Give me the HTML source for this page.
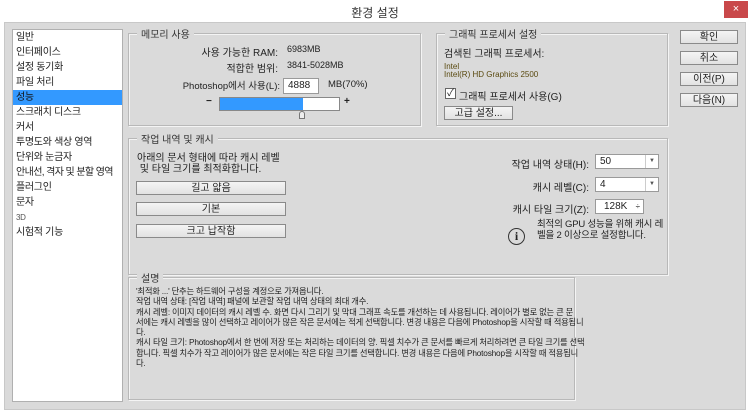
<!DOCTYPE html>
<html><head><meta charset="utf-8"><style>
*{margin:0;padding:0;box-sizing:border-box}
body{width:750px;height:415px;background:#fff;font-family:"Liberation Sans","Noto Sans CJK KR",sans-serif;font-size:10px;color:#222;position:relative;overflow:hidden}
.a{position:absolute;white-space:nowrap}
.r{position:absolute;white-space:nowrap;text-align:right}
.win{position:absolute;left:4px;top:22px;width:742px;height:388px;background:#dadada;border:1px solid #c8c8c8}
.grp{position:absolute;border:1px solid #b8b8b8;box-shadow:1px 1px 0 #f4f4f4 inset,1px 1px 0 #f4f4f4}
.lg{position:absolute;background:#dadada;padding:0 4px;top:-8px;left:8px;color:#333;font-size:10px}
.btn{position:absolute;background:linear-gradient(#f4f4f4,#e2e2e2);border:1px solid #8a8a8a;text-align:center;font-size:10px;line-height:13px}
.inp{position:absolute;background:#fff;border:1px solid #9a9a9a;padding-left:4px;line-height:13px;font-size:10px}
.list div{height:15px;line-height:15px;padding-left:3px;font-size:10px;letter-spacing:-0.3px}
</style></head><body>
<div class="a" style="left:0;width:750px;text-align:center;font-size:12px;top:4px;color:#333">환경 설정</div>
<div class="a" style="left:724px;top:1px;width:24px;height:17px;background:#c9484a;color:#fff;text-align:center;line-height:16px;font-size:11px">×</div>
<div class="win"></div>
<div class="a list" style="left:12px;top:29px;width:111px;height:373px;background:#fff;border:1px solid #b0b0b0;overflow:hidden">
<div>일반</div><div>인터페이스</div><div>설정 동기화</div><div>파일 처리</div><div style="background:#3399ff;color:#111">성능</div><div>스크래치 디스크</div><div>커서</div><div>투명도와 색상 영역</div><div>단위와 눈금자</div><div style="letter-spacing:-0.6px">안내선, 격자 및 분할 영역</div><div>플러그인</div><div>문자</div><div style="font-size:8px;color:#555">3D</div><div>시험적 기능</div>
</div>
<div class="grp" style="left:128px;top:33px;width:293px;height:93px"><span class="lg">메모리 사용</span></div>
<div class="r" style="right:472px;top:44px">사용 가능한 RAM:</div><div class="a" style="left:287px;top:44px;font-size:9px">6983MB</div>
<div class="r" style="right:472px;top:60px">적합한 범위:</div><div class="a" style="left:287px;top:60px;font-size:9px">3841-5028MB</div>
<div class="r" style="right:470px;top:78px;font-size:9.5px">Photoshop에서 사용(L):</div>
<div class="inp" style="left:283px;top:78px;width:36px;height:16px">4888</div>
<div class="a" style="left:328px;top:79px;font-size:9.5px">MB(70%)</div>
<div class="a" style="left:206px;top:96px;font-weight:bold">−</div>
<div class="a" style="left:219px;top:97px;width:121px;height:14px;background:#fff;border:1px solid #888"><div style="width:83px;height:12px;background:#3399ff"></div></div>
<div class="a" style="left:344px;top:96px;font-weight:bold">+</div>
<div class="a" style="left:299px;top:111px;width:6px;height:8px;border:1px solid #777;border-radius:3px 3px 0 0;background:#eee"></div>
<div class="grp" style="left:436px;top:33px;width:232px;height:93px"><span class="lg">그래픽 프로세서 설정</span></div>
<div class="a" style="left:444px;top:45px">검색된 그래픽 프로세서:</div>
<div class="a" style="left:444px;top:62px;font-size:8px;color:#5a4a10">Intel</div>
<div class="a" style="left:444px;top:70px;font-size:8px;color:#5a4a10">Intel(R) HD Graphics 2500</div>
<div class="a" style="left:445px;top:88px;width:11px;height:11px;border:1px solid #666;background:#fff;font-size:10px;line-height:9px;text-align:center">✓</div>
<div class="a" style="left:459px;top:88px">그래픽 프로세서 사용(G)</div>
<div class="btn" style="left:444px;top:106px;width:69px;height:14px">고급 설정...</div>
<div class="btn" style="left:680px;top:30px;width:58px;height:14px">확인</div>
<div class="btn" style="left:680px;top:51px;width:58px;height:14px">취소</div>
<div class="btn" style="left:680px;top:72px;width:58px;height:14px">이전(P)</div>
<div class="btn" style="left:680px;top:93px;width:58px;height:14px">다음(N)</div>
<div class="grp" style="left:128px;top:138px;width:540px;height:137px"><span class="lg">작업 내역 및 캐시</span></div>
<div class="a" style="left:137px;top:153px;line-height:11px">아래의 문서 형태에 따라 캐시 레벨<br>&nbsp;및 타일 크기를 최적화합니다.</div>
<div class="btn" style="left:136px;top:181px;width:150px;height:14px">길고 얇음</div>
<div class="btn" style="left:136px;top:202px;width:150px;height:14px">기본</div>
<div class="btn" style="left:136px;top:224px;width:150px;height:14px">크고 납작함</div>
<div class="r" style="right:161px;top:156px">작업 내역 상태(H):</div>
<div class="inp" style="left:595px;top:154px;width:64px;height:15px">50<span style="position:absolute;right:0;top:0;width:13px;height:13px;border-left:1px solid #ccc;font-size:6px;text-align:center;color:#555">▼</span></div>
<div class="r" style="right:161px;top:179px">캐시 레벨(C):</div>
<div class="inp" style="left:595px;top:177px;width:64px;height:15px">4<span style="position:absolute;right:0;top:0;width:13px;height:13px;border-left:1px solid #ccc;font-size:6px;text-align:center;color:#555">▼</span></div>
<div class="r" style="right:161px;top:201px">캐시 타일 크기(Z):</div>
<div class="inp" style="left:595px;top:199px;width:49px;height:15px;padding-left:8px">128K<span style="position:absolute;right:3px;top:0;font-size:8px">÷</span></div>
<div class="a" style="left:537px;top:219px;line-height:11px;font-size:9.5px;letter-spacing:-0.2px">최적의 GPU 성능을 위해 캐시 레<br>벨을 2 이상으로 설정합니다.</div>
<div class="a" style="left:508px;top:228px;width:17px;height:17px;border:1.5px solid #333;border-radius:50%;text-align:center;font:bold 12px/15px 'Liberation Serif',serif">i</div>
<div class="grp" style="left:128px;top:277px;width:447px;height:123px"><span class="lg">설명</span></div>
<div class="a" style="left:136px;top:286px;font-size:8.3px;line-height:10.3px;letter-spacing:-0.2px">'최적화 ...' 단추는 하드웨어 구성을 계정으로 가져옵니다.<br>작업 내역 상태: [작업 내역] 패널에 보관할 작업 내역 상태의 최대 개수.<br>캐시 레벨: 이미지 데이터의 캐시 레벨 수. 화면 다시 그리기 및 막대 그래프 속도를 개선하는 데 사용됩니다. 레이어가 별로 없는 큰 문<br>서에는 캐시 레벨을 많이 선택하고 레이어가 많은 작은 문서에는 적게 선택합니다. 변경 내용은 다음에 Photoshop을 시작할 때 적용됩니<br>다.<br>캐시 타일 크기: Photoshop에서 한 번에 저장 또는 처리하는 데이터의 양. 픽셀 치수가 큰 문서를 빠르게 처리하려면 큰 타일 크기를 선택<br>합니다. 픽셀 치수가 작고 레이어가 많은 문서에는 작은 타일 크기를 선택합니다. 변경 내용은 다음에 Photoshop을 시작할 때 적용됩니<br>다.</div>
</body></html>
